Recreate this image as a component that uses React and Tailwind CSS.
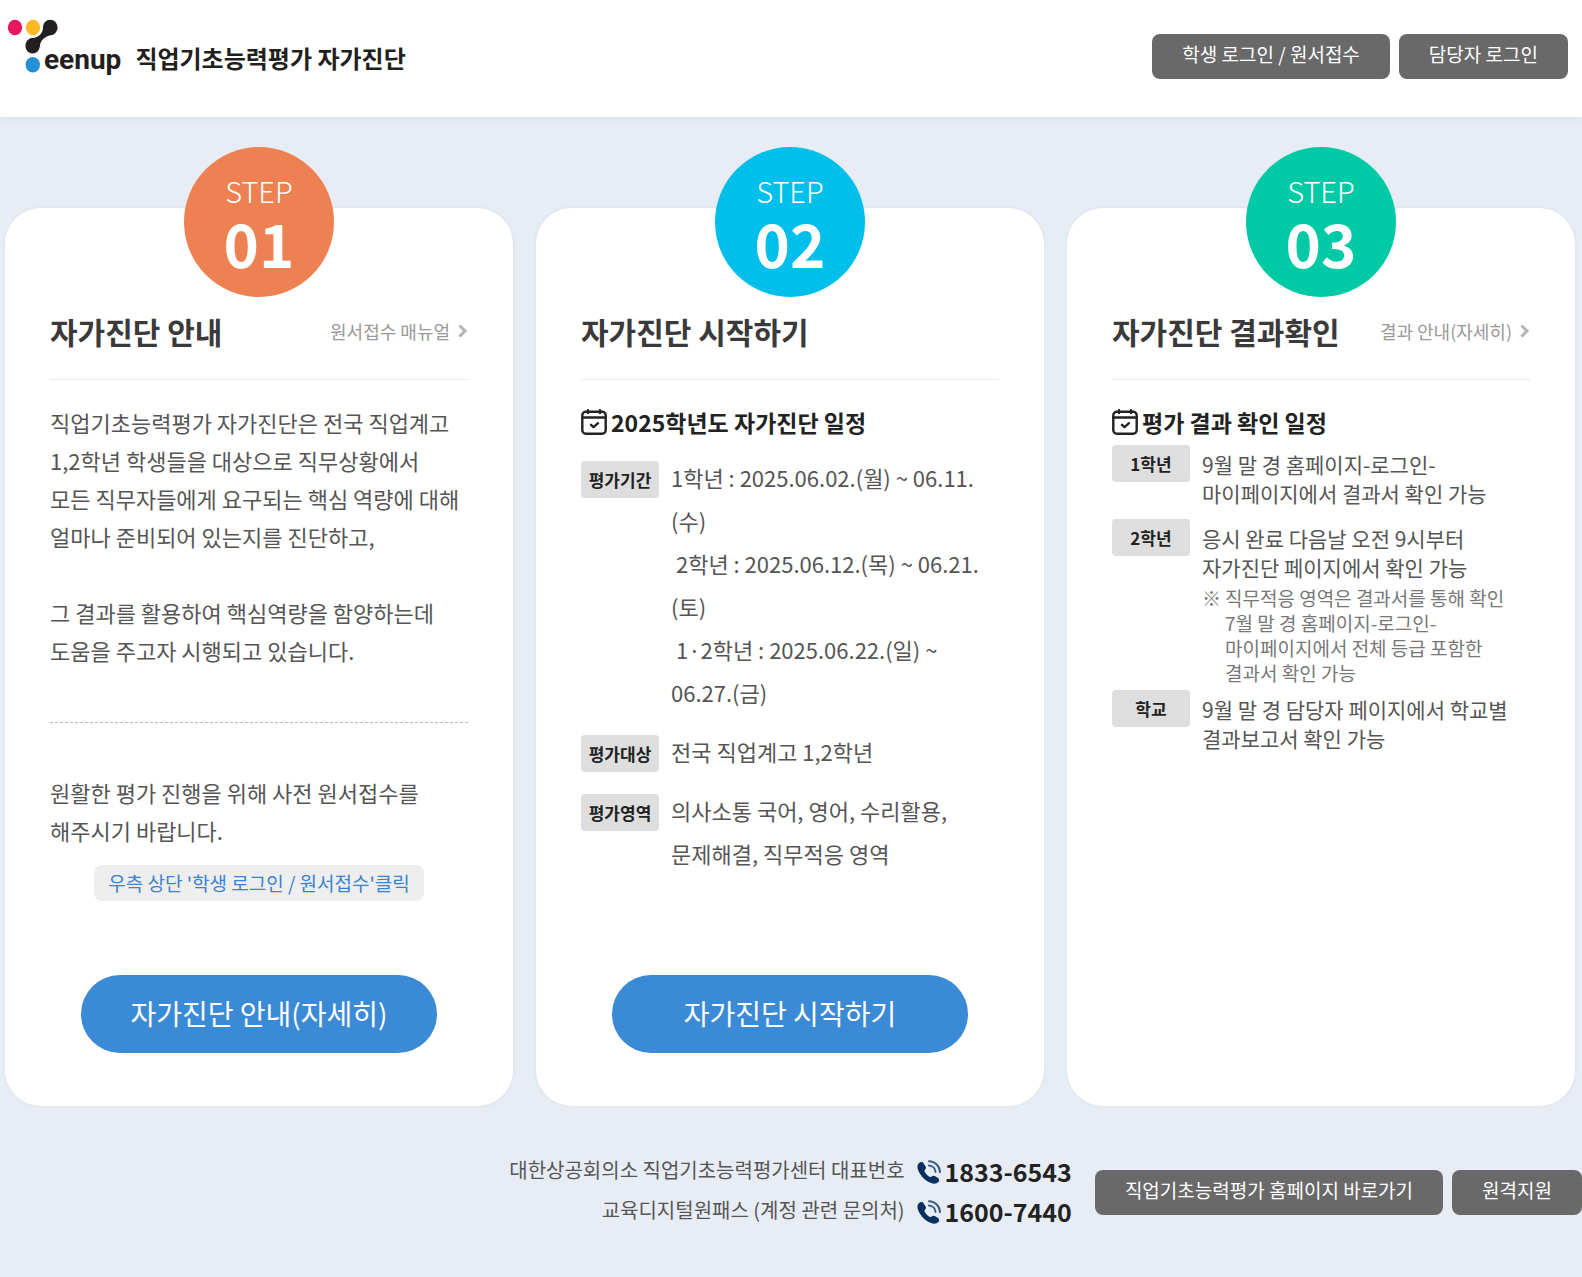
const steps = {
  "01": "bg-[#ee8152]",
  "02": "bg-[#00bfea]",
  "03": "bg-[#00caa6]",
};

function Logo() {
  return (
    <a href="#" className="flex items-start text-[#231f20]">
      <svg viewBox="0 0 60 60" className="h-[60px] w-[60px] flex-none" aria-hidden="true">
        <ellipse cx="15" cy="11.5" rx="7.2" ry="7.7" fill="#e6175c" />
        <ellipse cx="33" cy="11.5" rx="7.2" ry="7.7" fill="#fdb924" />
        <ellipse cx="32.8" cy="48.7" rx="7.2" ry="7.7" fill="#2590d4" />
        <g fill="#231f20">
          <ellipse cx="50.2" cy="11.5" rx="7.4" ry="7.7" />
          <ellipse cx="32.6" cy="29.8" rx="7.2" ry="7.7" />
          <path d="M43.200 9.500C43.200 18 39 21.500 29.500 23L39.500 31.500C40.500 24 44 20.500 53.500 18.500z" />
        </g>
      </svg>
      <span className="-ml-4 mt-[26px] font-[Roboto] text-[28px] leading-[36px] font-bold">eenup</span>
      <span className="mt-6 ml-3.5 text-2xl leading-[36px] font-bold">직업기초능력평가 자가진단</span>
    </a>
  );
}

function GrayLink({ children }) {
  return (
    <a
      href="#"
      className="flex h-[45px] items-center rounded-lg bg-[#696969] px-[30px] pb-1 text-[19px] whitespace-nowrap text-white"
    >
      {children}
    </a>
  );
}

function CalendarIcon() {
  return (
    <svg
      viewBox="0 0 26 26"
      className="h-[26px] w-[26px] flex-none"
      fill="none"
      stroke="#222"
      strokeWidth="2.4"
      strokeLinecap="round"
      strokeLinejoin="round"
      aria-hidden="true"
    >
      <rect x="1.300" y="2.800" width="23.400" height="22" rx="3.500" />
      <path d="M1.500 8.500h23M7 1.300v2.600M19 1.300v2.600M10 15.800l2.500 2.400 4.500-4" />
    </svg>
  );
}

function PhoneIcon() {
  return (
    <svg viewBox="0 0 24 24" className="h-6 w-6 flex-none" fill="none" aria-hidden="true">
      <path
        d="M1.800 3.200C3.300 1.400 5.400 1.600 6.500 3.200l2 3.100c.8 1.300.6 2.400-.5 3.500-.7.700-.7 1.400-.1 2.400 1.100 1.900 2.600 3.400 4.500 4.500.9.500 1.600.5 2.300-.1 1.200-1.100 2.300-1.200 3.600-.3l2.700 1.800c1.500 1.100 1.600 2.700.3 4-1.900 1.900-4.300 2.100-7.300.9C7.800 20.500 3.100 15.700.9 9.500.1 7 .3 4.900 1.800 3.200z"
        fill="#06305f"
      />
      <path
        d="M12 5.500c3.500.3 6.200 3 6.500 6.500M12 1.200c6.100.2 10.800 4.900 11 11"
        stroke="#3f5f85"
        strokeWidth="2"
        strokeLinecap="round"
      />
    </svg>
  );
}

function StepCard({ step, title, link, children, action }) {
  return (
    <section className="flex flex-col rounded-[36px] bg-white px-[45px] pb-[53px] shadow-[0_0_4px_rgba(0,0,0,0.06)]">
      <div
        className={`-mt-[61px] flex h-[150px] w-[150px] flex-none flex-col items-center justify-center self-center rounded-full pb-1 text-white ${steps[step]}`}
      >
        <span className="text-[29px] leading-[44px] font-light">STEP</span>
        <span className="text-6xl leading-[60px] font-bold">{step}</span>
      </div>
      <div className="mt-2.5 flex items-center justify-between border-b border-[#ebebeb] pb-6">
        <h2 className="text-3xl leading-[48px] font-bold whitespace-nowrap text-[#3a3a3a]">{title}</h2>
        {link && (
          <a href="#" className="flex items-center gap-2 text-lg whitespace-nowrap text-[#999]">
            {link}
            <svg viewBox="0 0 10 14" className="h-3.5 w-2.5" fill="none" stroke="#b3b3b3" strokeWidth="3" aria-hidden="true">
              <path d="M1.500 1.500 7 7l-5.500 5.500" />
            </svg>
          </a>
        )}
      </div>
      {children}
      {action && (
        <button
          type="button"
          className="mt-auto h-[78px] w-[85%] self-center rounded-full bg-[#3b8ad6] pb-0.5 text-[28px] text-white"
        >
          {action}
        </button>
      )}
    </section>
  );
}

function SubTitle({ children }) {
  return (
    <h3 className="mt-[23px] flex items-center gap-1 text-[23px] leading-[38px] font-bold text-[#222]">
      <CalendarIcon />
      {children}
    </h3>
  );
}

function Row({ label, children }) {
  return (
    <div className="flex gap-3">
      <dt className="h-[37px] w-[78px] flex-none rounded bg-[#dedede] text-center text-[17px] leading-[37px] font-bold text-[#222]">
        {label}
      </dt>
      <dd className="text-[#555]">{children}</dd>
    </div>
  );
}

function Contact({ label, phone }) {
  return (
    <div className="flex h-10 items-center justify-end">
      <span className="mr-3 pb-1 text-[20px] text-[#555]">{label}</span>
      <a href={`tel:${phone}`} className="flex items-center gap-1 text-[25px] font-bold text-[#222]">
        <PhoneIcon />
        {phone}
      </a>
    </div>
  );
}

export default function App() {
  return (
    <div className="flex min-h-screen flex-col bg-[#e8edf5] font-['Noto_Sans_CJK_KR',sans-serif]">
      <header className="flex h-[117px] items-start justify-between bg-white pr-3.5 shadow-[0_0_10px_rgba(0,0,0,0.08)]">
        <div className="pt-4">
          <Logo />
        </div>
        <nav className="flex gap-[9px] pt-[34px]">
          <GrayLink>학생 로그인 / 원서접수</GrayLink>
          <GrayLink>담당자 로그인</GrayLink>
        </nav>
      </header>

      <main className="mt-[91px] grid grid-cols-3 gap-[23px] pr-[7px] pl-[5px]">
        <StepCard step="01" title="자가진단 안내" link="원서접수 매뉴얼" action="자가진단 안내(자세히)">
          <p className="mt-[23px] border-b border-dashed border-[#bbb] pb-[53px] text-[22px] leading-[38px] text-[#555]">
            직업기초능력평가 자가진단은 전국 직업계고
            <br />
            1,2학년 학생들을 대상으로 직무상황에서
            <br />
            모든 직무자들에게 요구되는 핵심 역량에 대해
            <br />
            얼마나 준비되어 있는지를 진단하고,
            <br />
            <br />
            그 결과를 활용하여 핵심역량을 함양하는데
            <br />
            도움을 주고자 시행되고 있습니다.
          </p>
          <p className="mt-[50px] text-[22px] leading-[38px] text-[#555]">
            원활한 평가 진행을 위해 사전 원서접수를
            <br />
            해주시기 바랍니다.
          </p>
          <p className="mt-4 mb-[74px] self-center rounded-lg bg-[#eee] px-3.5 text-[19px] leading-[36px] whitespace-nowrap text-[#3b82d0]">
            우측 상단 '학생 로그인 / 원서접수'클릭
          </p>
        </StepCard>

        <StepCard step="02" title="자가진단 시작하기" action="자가진단 시작하기">
          <SubTitle>2025학년도 자가진단 일정</SubTitle>
          <dl className="mt-5 flex flex-col gap-[21px] text-[22px] leading-[43px]">
            <Row label="평가기간">
              <div className="-mt-[5px]">
                1학년 : 2025.06.02.(월) ~ 06.11.
                <br />
                (수)
                <br />
                &nbsp;2학년 : 2025.06.12.(목) ~ 06.21.
                <br />
                (토)
                <br />
                &nbsp;1·2학년 : 2025.06.22.(일) ~
                <br />
                06.27.(금)
              </div>
            </Row>
            <Row label="평가대상">
              <div className="-mt-[5px]">전국 직업계고 1,2학년</div>
            </Row>
            <Row label="평가영역">
              <div className="-mt-[5px]">
                의사소통 국어, 영어, 수리활용,
                <br />
                문제해결, 직무적응 영역
              </div>
            </Row>
          </dl>
        </StepCard>

        <StepCard step="03" title="자가진단 결과확인" link="결과 안내(자세히)">
          <SubTitle>평가 결과 확인 일정</SubTitle>
          <dl className="mt-1 flex flex-col text-[21px] leading-[29px]">
            <Row label="1학년">
              <div className="pt-[5px] pb-[11px]">
                9월 말 경 홈페이지-로그인-
                <br />
                마이페이지에서 결과서 확인 가능
              </div>
            </Row>
            <Row label="2학년">
              <div className="pt-[5px]">
                응시 완료 다음날 오전 9시부터
                <br />
                자가진단 페이지에서 확인 가능
              </div>
              <div className="flex gap-1 pt-[3px] pb-[5px] text-[19px] leading-[25px] text-[#777]">
                <span>※</span>
                <p>
                  직무적응 영역은 결과서를 통해 확인
                  <br />
                  7월 말 경 홈페이지-로그인-
                  <br />
                  마이페이지에서 전체 등급 포함한
                  <br />
                  결과서 확인 가능
                </p>
              </div>
            </Row>
            <Row label="학교">
              <div className="pt-[5px]">
                9월 말 경 담당자 페이지에서 학교별
                <br />
                결과보고서 확인 가능
              </div>
            </Row>
          </dl>
        </StepCard>
      </main>

      <footer className="mt-[46px] flex items-center justify-end">
        <div className="mr-[23px]">
          <Contact label="대한상공회의소 직업기초능력평가센터 대표번호" phone="1833-6543" />
          <Contact label="교육디지털원패스 (계정 관련 문의처)" phone="1600-7440" />
        </div>
        <div className="flex gap-[9px]">
          <GrayLink>직업기초능력평가 홈페이지 바로가기</GrayLink>
          <GrayLink>원격지원</GrayLink>
        </div>
      </footer>
    </div>
  );
}
